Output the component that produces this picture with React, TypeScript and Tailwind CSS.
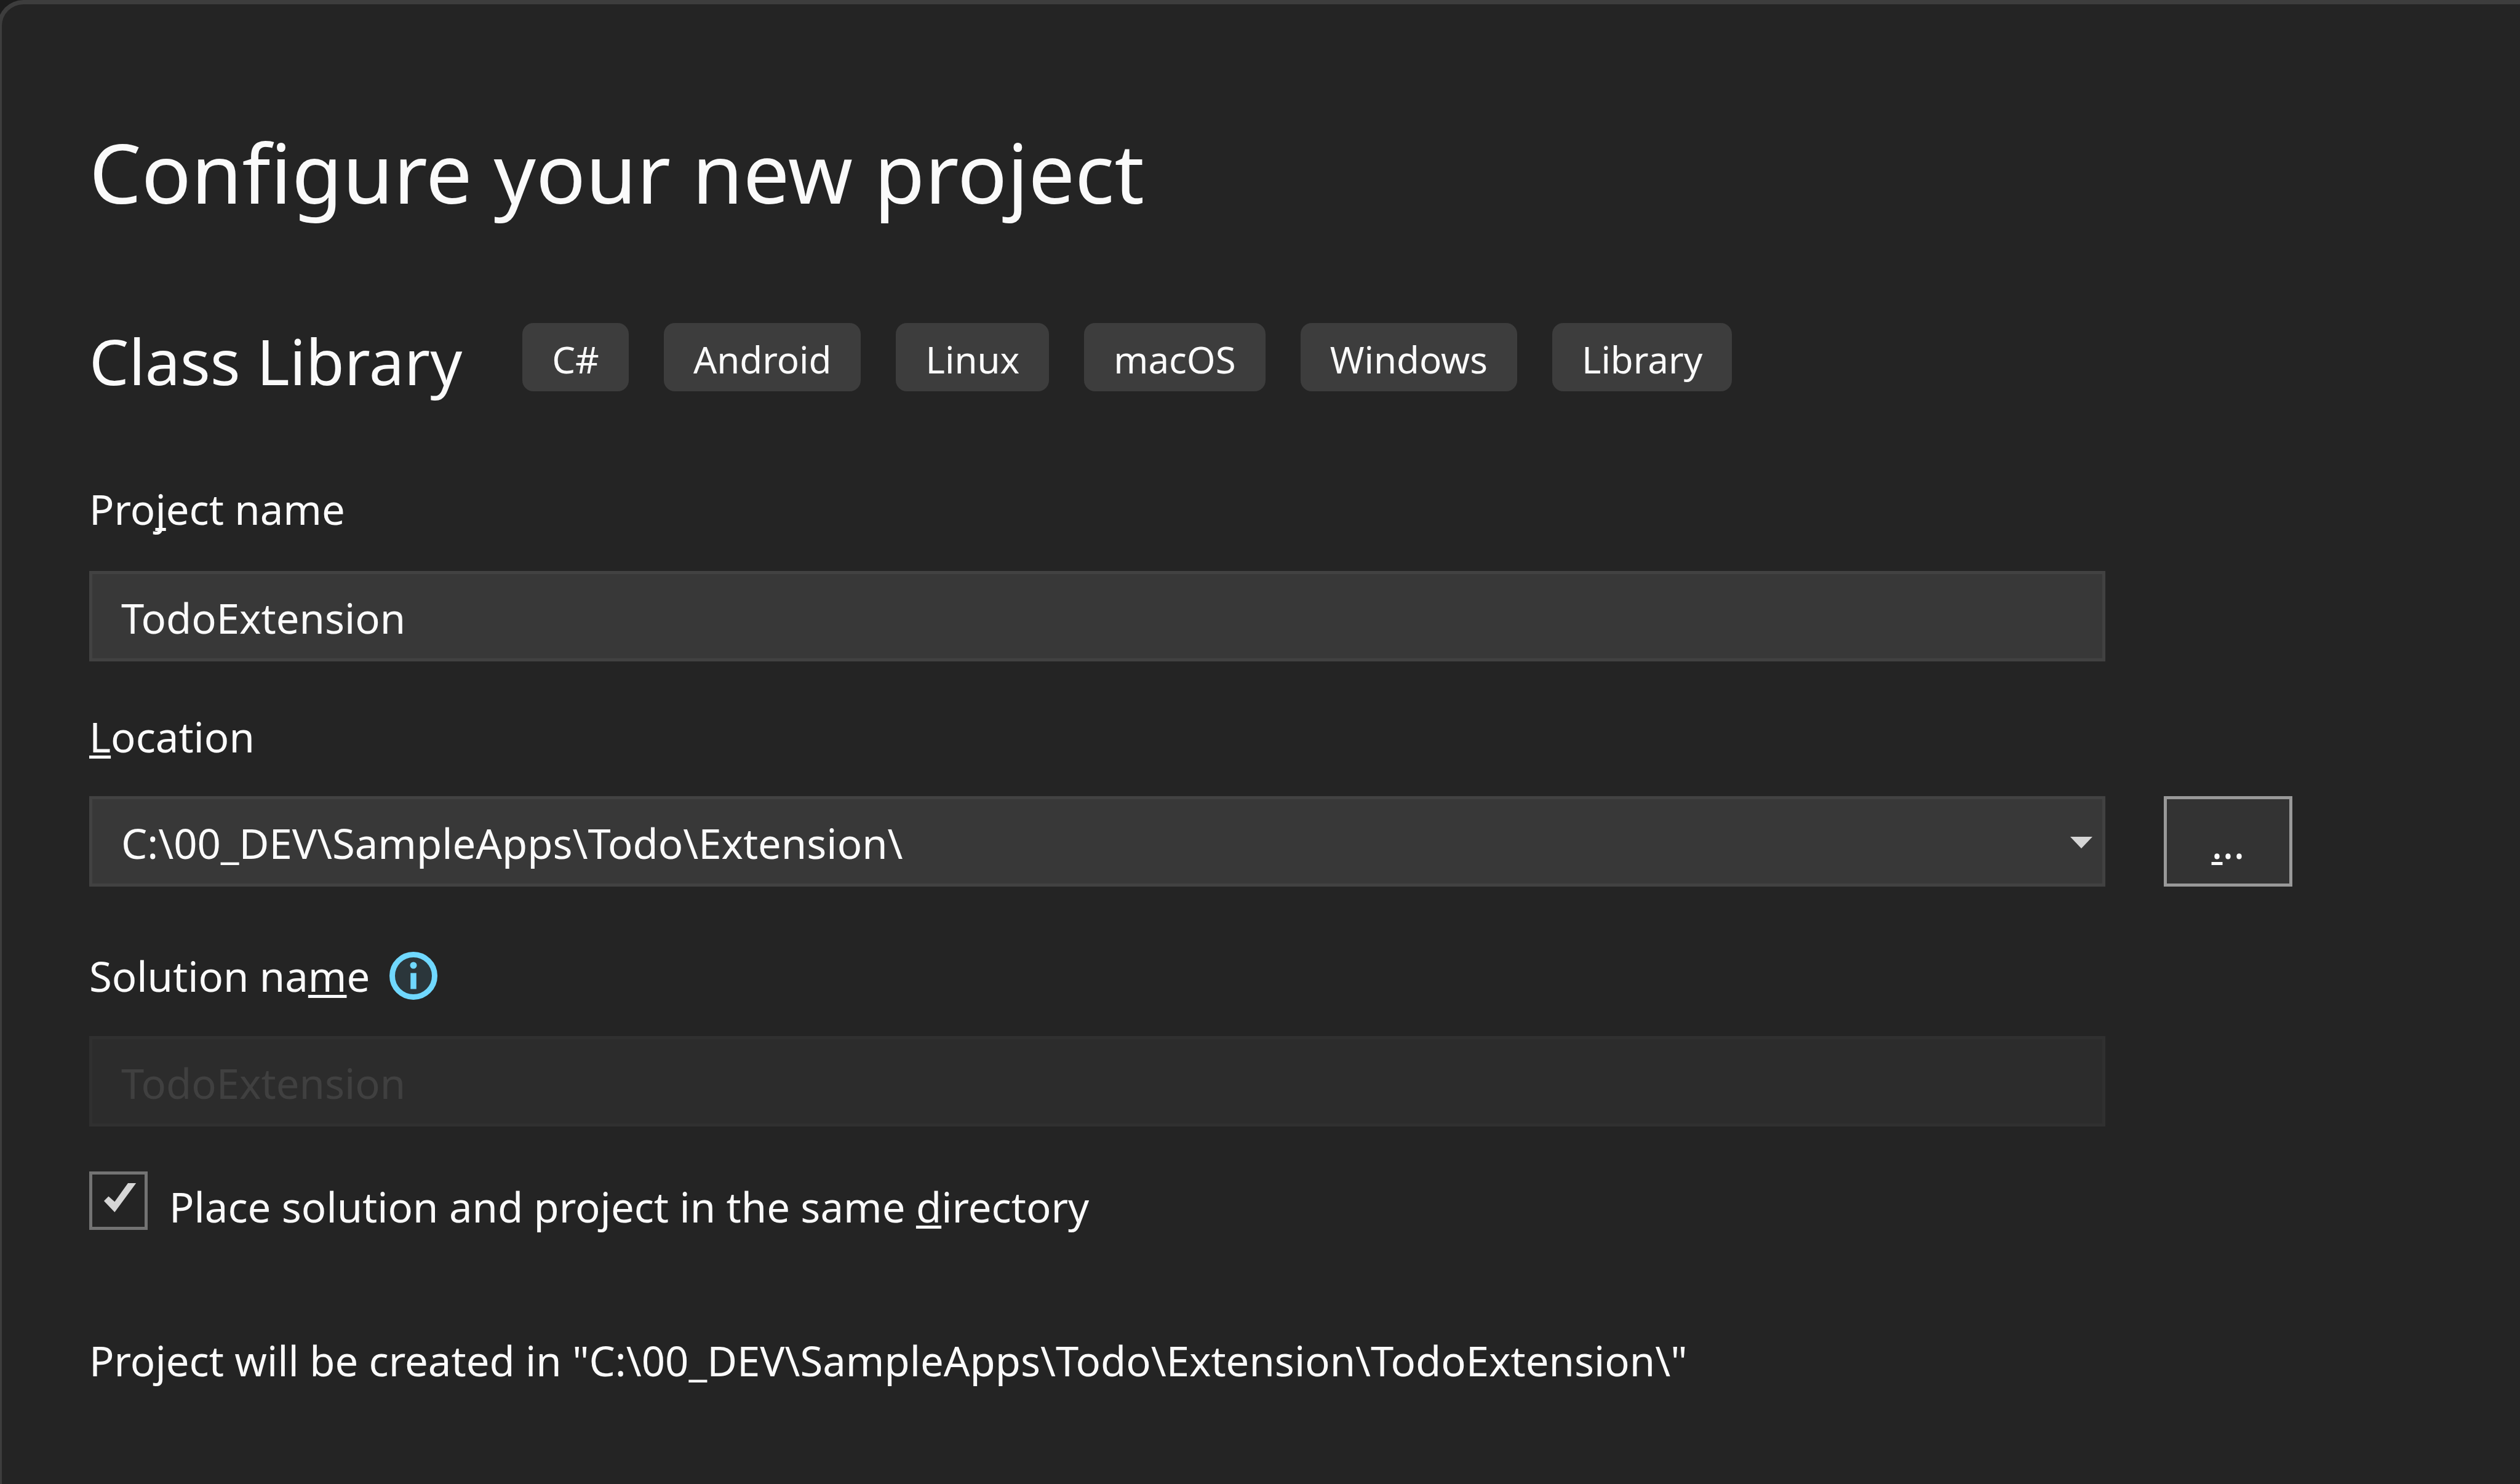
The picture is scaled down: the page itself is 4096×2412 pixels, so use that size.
import type { ReactNode } from "react";

const TAGS = ["C#", "Android", "Linux", "macOS", "Windows", "Library"];

/** Underlined access-key letter inside a label. */
function Key({ children }: { children: ReactNode }) {
  return (
    <span className="underline decoration-[5px] underline-offset-[5px] [text-decoration-skip-ink:none]">
      {children}
    </span>
  );
}

function InfoIcon() {
  return (
    <svg viewBox="0 0 80 80" className="size-20" fill="none" aria-hidden="true">
      <circle cx="40" cy="40" r="34.5" fill="#2b363b" stroke="#70d8ff" strokeWidth="9" />
      <circle cx="40" cy="23" r="5.5" fill="#70d8ff" />
      <rect x="35.25" y="35.5" width="9.5" height="26" fill="#70d8ff" />
    </svg>
  );
}

export default function App() {
  return (
    <div className="min-h-screen overflow-hidden bg-[#1c1c1c]">
      <main className="-ml-1 min-h-screen rounded-tl-[42px] border-t-[7px] border-l-[7px] border-[#3d3d3d] bg-[#242424] pt-48 pr-[370px] pl-[142px] font-['Noto_Sans',sans-serif] text-[67px] leading-[90px] text-[#fafafa]">
        <h1 className="text-[134px] leading-[160px]">Configure your new project</h1>

        <div className="mt-[163px] flex items-start gap-[98px]">
          <h2 className="shrink-0 text-[102px] leading-[130px]">Class Library</h2>
          <ul className="flex flex-wrap gap-[57px] pt-[3px]">
            {TAGS.map((tag) => (
              <li
                key={tag}
                className="rounded-[18px] bg-[#3d3d3d] px-12 pt-3 pb-1 text-[60px] leading-[95px]"
              >
                {tag}
              </li>
            ))}
          </ul>
        </div>

        <form
          className="mt-[130px] grid grid-cols-[minmax(0,1fr)_209px] gap-x-[95px]"
          onSubmit={(event) => event.preventDefault()}
        >
          <label htmlFor="project-name" className="justify-self-start">
            Pro<Key>j</Key>ect name
          </label>
          <input
            id="project-name"
            type="text"
            defaultValue="TodoExtension"
            className="col-start-1 mt-14 h-[147px] w-full border-[5px] border-[#424242] bg-[#383838] px-[47px] pt-1 outline-none"
          />

          <label htmlFor="location" className="col-start-1 mt-[77px] justify-self-start">
            <Key>L</Key>ocation
          </label>
          <div className="relative col-start-1 mt-[52px]">
            <select
              id="location"
              className="block h-[147px] w-full appearance-none border-[5px] border-[#424242] bg-[#383838] px-[47px] pt-1 outline-none"
            >
              <option>{"C:\\00_DEV\\SampleApps\\Todo\\Extension\\"}</option>
            </select>
            <svg
              viewBox="0 0 36 19"
              className="pointer-events-none absolute top-[66px] right-[21px] h-[19px] w-9"
              aria-hidden="true"
            >
              <path d="M0 0H36L18 19Z" fill="#d6d6d6" />
            </svg>
          </div>
          <button
            type="button"
            aria-label="Browse for location"
            className="mt-[52px] h-[147px] border-[5px] border-[#999999] bg-[#333333] pt-1"
          >
            <Key>.</Key>..
          </button>

          <div className="col-start-1 mt-[100px] flex h-[90px] items-center gap-[31px]">
            <label htmlFor="solution-name">
              Solution na<Key>m</Key>e
            </label>
            <InfoIcon />
          </div>
          <input
            id="solution-name"
            type="text"
            disabled
            defaultValue="TodoExtension"
            className="col-start-1 mt-[53px] h-[147px] w-full border-[5px] border-[#303030] bg-[#2c2c2c] px-[47px] pt-1 text-[#404040]"
          />

          <div className="col-start-1 mt-[73px] flex items-start gap-[35px]">
            <span className="relative size-[95px] shrink-0">
              <input
                id="same-directory"
                type="checkbox"
                defaultChecked
                className="peer block size-[95px] appearance-none border-[5px] border-[#737373] bg-[#242424]"
              />
              <svg
                viewBox="0 0 95 95"
                className="pointer-events-none absolute inset-0 hidden size-[95px] peer-checked:block"
                aria-hidden="true"
              >
                <path d="M24 48L31.4 40.6L41.4 49.3L63 19H76.2L41.4 66.3Z" fill="#d6d6d6" />
              </svg>
            </span>
            <label htmlFor="same-directory" className="pt-3">
              Place solution and project in the same <Key>d</Key>irectory
            </label>
          </div>
        </form>

        <p className="mt-40">
          {'Project will be created in "C:\\00_DEV\\SampleApps\\Todo\\Extension\\TodoExtension\\"'}
        </p>
      </main>
    </div>
  );
}
